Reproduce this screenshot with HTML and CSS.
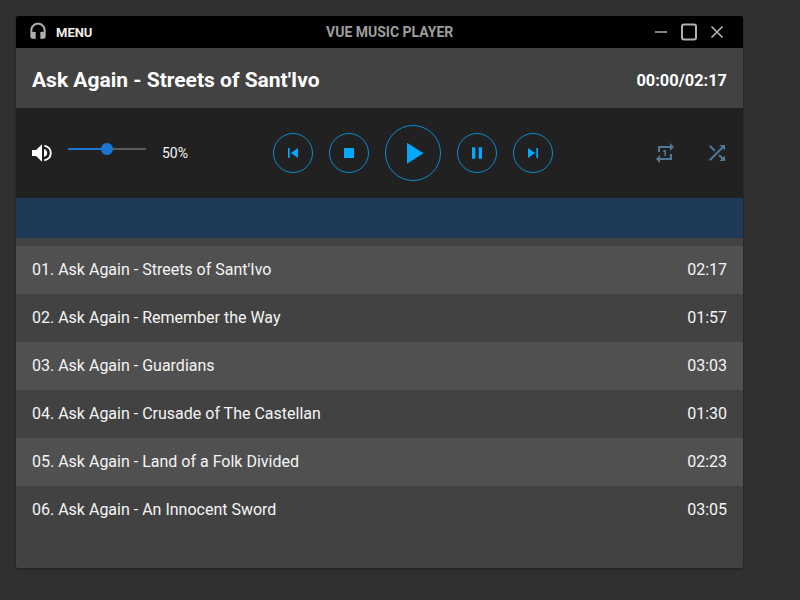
FILE: index.html
```html
<!DOCTYPE html>
<html lang="en">
<head>
<meta charset="utf-8">
<title>Vue Music Player</title>
<link rel="stylesheet" href="styles.css">
</head>
<body>
<main class="player">
  <header class="topbar">
    <div class="menu">
      <svg class="icon-head" viewBox="0 0 24 24"><path d="M12,1C7,1 3,5 3,10V17A3,3 0 0,0 6,20H9V12H5V10A7,7 0 0,1 12,3A7,7 0 0,1 19,10V12H15V20H18A3,3 0 0,0 21,17V10C21,5 17,1 12,1Z"/></svg>
      <span class="menu-label">MENU</span>
    </div>
    <div class="app-title">VUE MUSIC PLAYER</div>
    <div class="win">
      <svg class="win-icon thin" viewBox="0 0 24 24"><path d="M6 12H18"/></svg>
      <svg class="win-icon" viewBox="0 0 24 24"><rect x="5" y="4.5" width="14" height="15" rx="2"/></svg>
      <svg class="win-icon thin" viewBox="0 0 24 24"><path d="M6.5 6.5L17.5 17.5M17.5 6.5L6.5 17.5"/></svg>
    </div>
  </header>
  <section class="now">
    <h1 class="now-title">Ask Again - Streets of Sant'Ivo</h1>
    <div class="now-time">00:00/02:17</div>
  </section>
  <section class="controls">
    <div class="volume">
      <svg class="icon-vol" viewBox="0 0 20 20"><path d="M0,7H4L10,1.2V18.8L4,13H0Z"/><path class="vol-arc" d="M12.4,2.6C16.4,3.6 18.8,6.5 18.8,10C18.8,13.5 16.4,16.4 12.4,17.4"/><path d="M12,6V14C14,13.4 15.2,11.8 15.2,10C15.2,8.2 14,6.6 12,6Z"/></svg>
      <div class="slider"><span class="slider-fill"></span><span class="slider-thumb"></span></div>
      <span class="vol-label">50%</span>
    </div>
    <div class="transport">
      <button class="round"><svg viewBox="0 0 24 24"><path d="M6,18V6H8V18H6M9.5,12L18,6V18L9.5,12Z"/></svg></button>
      <button class="round"><svg viewBox="0 0 24 24"><path d="M18,18H6V6H18V18Z"/></svg></button>
      <button class="round big"><svg viewBox="0 0 24 24"><path d="M8,5.14V19.14L19,12.14L8,5.14Z"/></svg></button>
      <button class="round"><svg viewBox="0 0 24 24"><path d="M14,19H18V5H14M6,19H10V5H6V19Z"/></svg></button>
      <button class="round"><svg viewBox="0 0 24 24"><path d="M16,18H18V6H16M6,18L14.5,12L6,6V18Z"/></svg></button>
    </div>
    <div class="modes">
      <svg class="mode" viewBox="0 0 24 24"><path d="M13,15V9H12L10,10V11H11.5V15M17,17H7V14L3,18L7,22V19H19V13H17M7,7H17V10L21,6L17,2V5H5V11H7V7Z"/></svg>
      <svg class="mode" viewBox="0 0 24 24"><path d="M14.83,13.41L13.42,14.82L16.55,17.95L14.5,20H20V14.5L17.96,16.54L14.83,13.41M14.5,4L16.54,6.04L4,18.59L5.41,20L17.96,7.46L20,9.5V4M10.59,9.17L5.41,4L4,5.41L9.17,10.58L10.59,9.17Z"/></svg>
    </div>
  </section>
  <div class="progress"></div>
  <ol class="tracks">
    <li class="track"><span>01. Ask Again - Streets of Sant'Ivo</span><span>02:17</span></li>
    <li class="track"><span>02. Ask Again - Remember the Way</span><span>01:57</span></li>
    <li class="track"><span>03. Ask Again - Guardians</span><span>03:03</span></li>
    <li class="track"><span>04. Ask Again - Crusade of The Castellan</span><span>01:30</span></li>
    <li class="track"><span>05. Ask Again - Land of a Folk Divided</span><span>02:23</span></li>
    <li class="track"><span>06. Ask Again - An Innocent Sword</span><span>03:05</span></li>
  </ol>
</main>
</body>
</html>
```
FILE: styles.css
```css
* { box-sizing: border-box; }
html, body { height: 100%; }
body {
  margin: 0;
  padding: 16px 0 0 16px;
  background: #303030;
  overflow: hidden;
  font-family: Roboto, "Liberation Sans", sans-serif;
  color: #fff;
}
.player {
  width: 727px;
  height: 552px;
  background: #424242;
  border-radius: 2px;
  box-shadow: 0 1px 3px rgba(0,0,0,.4);
  overflow: hidden;
}
.topbar {
  height: 32px;
  background: #000;
  display: flex;
  align-items: center;
  padding: 0 14px 0 12px;
}
.menu { display: flex; align-items: center; gap: 8px; width: 298px; }
.icon-head { width: 20px; height: 20px; fill: #b0b0b0; stroke: #b0b0b0; stroke-width: .4; }
.menu-label { font-size: 13px; font-weight: 700; color: #eee; }
.app-title { font-size: 14px; font-weight: 700; color: #9e9e9e; margin-right: auto; }
.win { display: flex; justify-content: flex-end; gap: 4px; }
.win-icon { width: 24px; height: 24px; fill: none; stroke: #b0b0b0; stroke-width: 2; }
.win-icon.thin { stroke-width: 1.7; }
.now {
  height: 60px;
  display: flex;
  align-items: center;
  justify-content: space-between;
  padding: 4px 16px 0;
}
.now-title { margin: 0; font-size: 21px; font-weight: 700; }
.now-time { font-size: 16.4px; font-weight: 700; }
.controls {
  height: 90px;
  background: #212121;
  display: grid;
  grid-template-columns: 241px auto 1fr;
  align-items: center;
  padding: 0 14px 0 16px;
}
.volume { display: flex; align-items: center; }
.icon-vol { width: 20px; height: 20px; fill: #fff; }
.vol-arc { fill: none; stroke: #fff; stroke-width: 1.8; }
.slider { position: relative; width: 78px; height: 2px; margin: -9px 16px 0; background: #5a5a5a; }
.slider-fill { position: absolute; left: 0; top: 0; width: 50%; height: 100%; background: #1976d2; }
.slider-thumb { position: absolute; left: 33px; top: -5px; width: 12px; height: 12px; border-radius: 50%; background: #1976d2; }
.vol-label { font-size: 14px; color: #f5f5f5; }
.transport { display: flex; align-items: center; gap: 16px; }
.round {
  width: 40px;
  height: 40px;
  padding: 0;
  display: flex;
  align-items: center;
  justify-content: center;
  background: transparent;
  border: 1px solid #0a8ed0;
  border-radius: 50%;
}
.round svg { width: 20px; height: 20px; fill: #00a8ff; }
.round.big { width: 56px; height: 56px; }
.round.big svg { width: 36px; height: 36px; }
.modes { display: flex; justify-content: flex-end; gap: 28px; }
.mode { width: 24px; height: 24px; fill: #4f7a96; }
.progress { height: 40px; background: #1f3a56; }
.tracks { list-style: none; margin: 8px 0 0; padding: 0; }
.track {
  height: 48px;
  display: flex;
  align-items: center;
  justify-content: space-between;
  padding: 0 16px 2px;
  font-size: 16px;
  color: #f5f5f5;
}
.track:nth-child(odd) { background: #505050; }
```
